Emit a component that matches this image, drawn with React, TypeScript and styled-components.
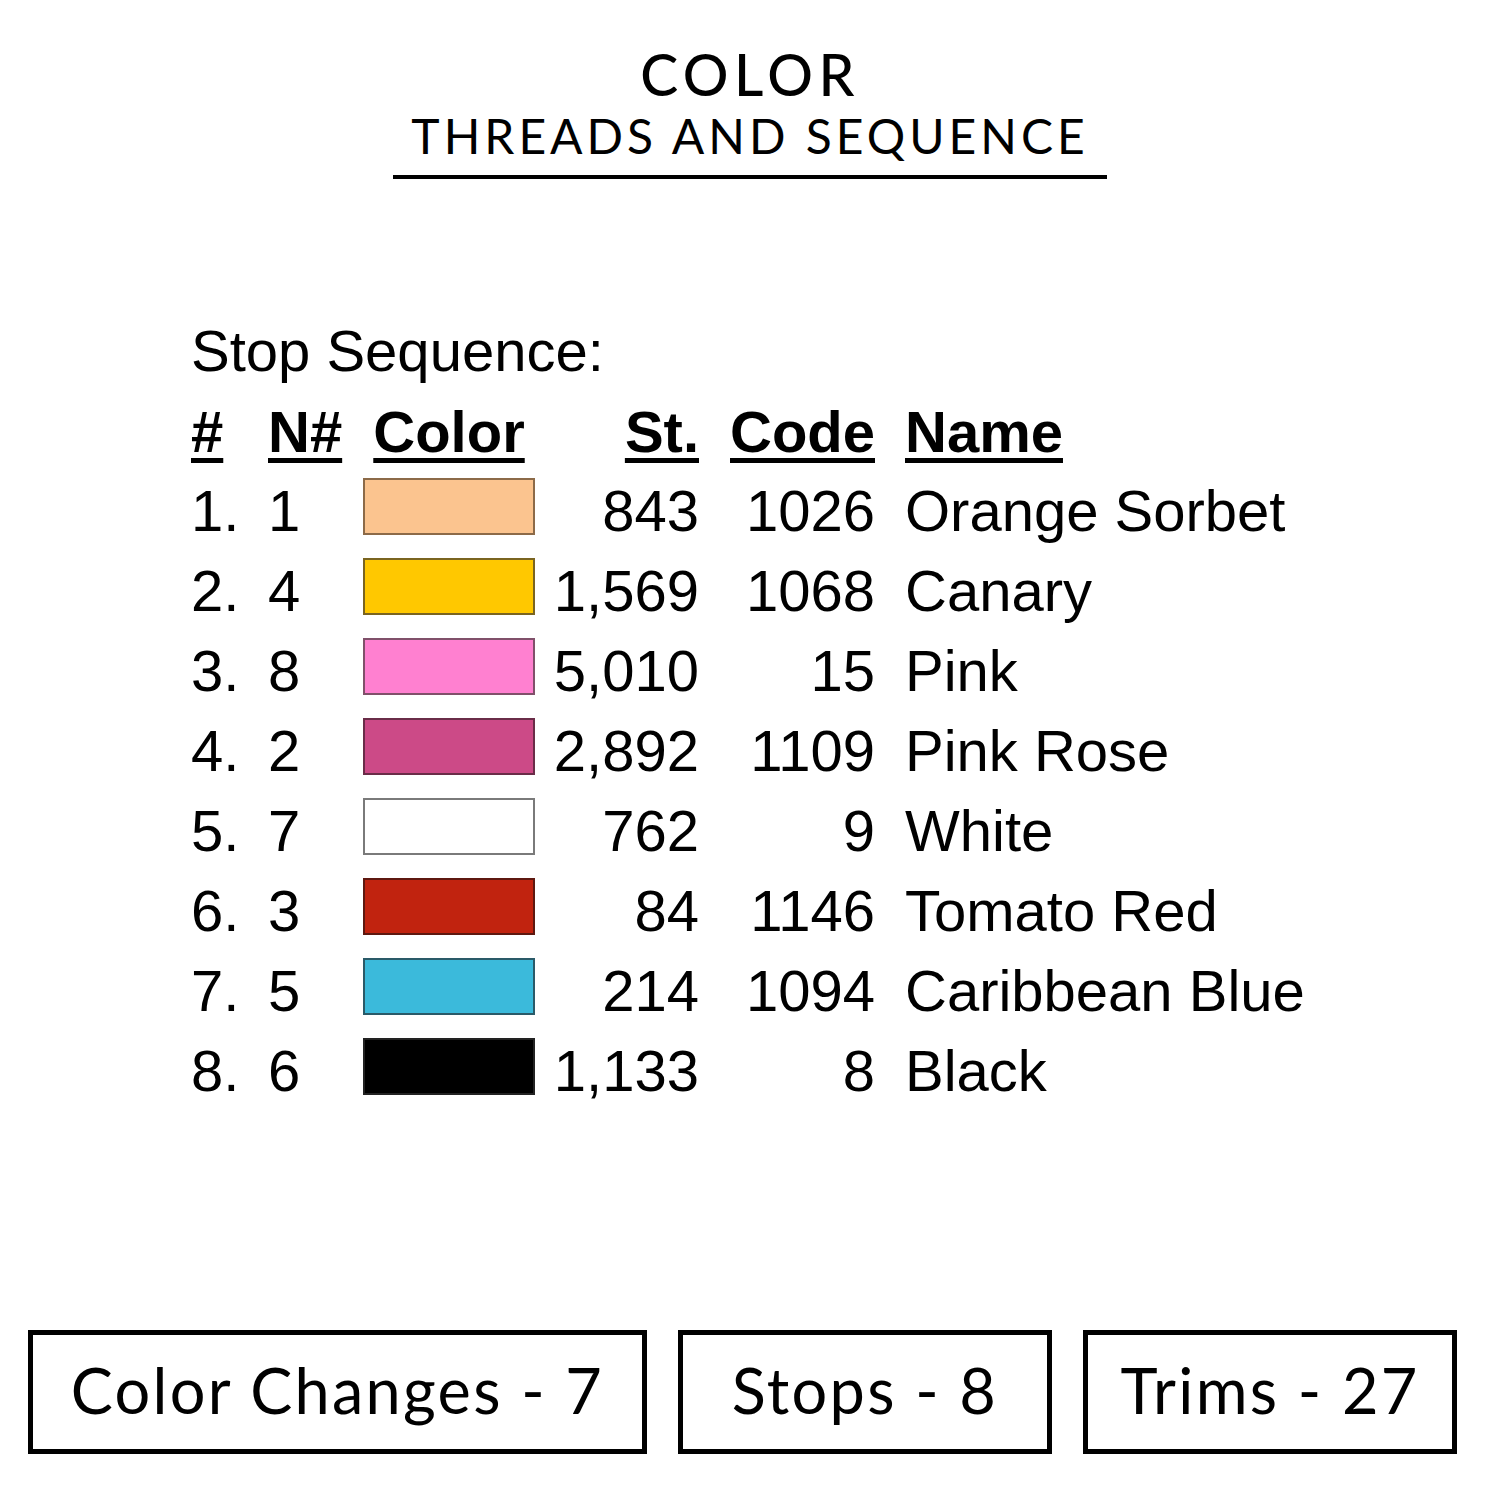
import React from 'react';
import styled, { createGlobalStyle } from 'styled-components';

const GlobalStyle = createGlobalStyle`
  html, body {
    margin: 0;
    padding: 0;
    background: #ffffff;
  }
`;

const Page = styled.div`
  width: 1500px;
  height: 1500px;
  background: #ffffff;
  display: flex;
  flex-direction: column;
  color: #000;
`;

const Header = styled.header`
  display: flex;
  flex-direction: column;
  align-items: center;
  padding-top: 44px;
`;

const Title = styled.h1`
  margin: 0;
  font-family: 'Lato', 'Open Sans', sans-serif;
  font-weight: 500;
  font-size: 57px;
  line-height: 60px;
  letter-spacing: 5.5px;
`;

const Subtitle = styled.h2`
  margin: 4px 0 0 0;
  padding: 0 18px 11px 18px;
  border-bottom: 4px solid #000;
  font-family: 'Lato', 'Open Sans', sans-serif;
  font-weight: 400;
  font-size: 48px;
  line-height: 56px;
  letter-spacing: 4px;
`;

const Sequence = styled.section`
  margin: 132px 0 0 191px;
  font-family: 'Liberation Sans', Arial, sans-serif;
  font-size: 58px;
`;

const Caption = styled.div`
  height: 80px;
  line-height: 80px;
`;

const Grid = styled.div`
  display: grid;
  grid-template-columns: 77px 95px 172px 164px 176px auto;
  grid-auto-rows: 80px;
  align-items: center;
`;

const HeadCell = styled.div<{ $align?: 'left' | 'center' | 'right'; $pad?: number }>`
  font-weight: bold;
  text-align: ${p => p.$align || 'left'};
  padding-left: ${p => p.$pad || 0}px;
  span {
    text-decoration: underline;
    text-decoration-thickness: 5px;
    text-underline-offset: 6px;
  }
`;

const Cell = styled.div<{ $align?: 'left' | 'right'; $pad?: number }>`
  text-align: ${p => p.$align || 'left'};
  padding-left: ${p => p.$pad || 0}px;
  white-space: nowrap;
  line-height: 1;
`;

const Swatch = styled.div<{ $color: string; $edge: string }>`
  height: 57px;
  margin-top: -9px;
  box-sizing: border-box;
  background: ${p => p.$color};
  border: 2px solid ${p => p.$edge};
`;

const Stats = styled.footer`
  margin-top: auto;
  margin-bottom: 46px;
  padding-left: 28px;
  display: flex;
  gap: 31px;
`;

const StatBox = styled.div<{ $width: number }>`
  width: ${p => p.$width}px;
  height: 124px;
  box-sizing: border-box;
  border: 5px solid #000;
  display: flex;
  align-items: center;
  justify-content: center;
  padding-bottom: 6px;
  font-family: 'Lato', 'Open Sans', sans-serif;
  font-size: 63px;
  letter-spacing: 2.3px;
`;

type Thread = {
  stop: number;
  needle: number;
  color: string;
  edge: string;
  stitches: string;
  code: string;
  name: string;
};

const threads: Thread[] = [
  { stop: 1, needle: 1, color: '#fbc48f', edge: '#8c6a48', stitches: '843', code: '1026', name: 'Orange Sorbet' },
  { stop: 2, needle: 4, color: '#ffc800', edge: '#7a6420', stitches: '1,569', code: '1068', name: 'Canary' },
  { stop: 3, needle: 8, color: '#ff80d0', edge: '#80506a', stitches: '5,010', code: '15', name: 'Pink' },
  { stop: 4, needle: 2, color: '#cc4a87', edge: '#6a2c48', stitches: '2,892', code: '1109', name: 'Pink Rose' },
  { stop: 5, needle: 7, color: '#ffffff', edge: '#7a7a7a', stitches: '762', code: '9', name: 'White' },
  { stop: 6, needle: 3, color: '#c1230f', edge: '#5e1810', stitches: '84', code: '1146', name: 'Tomato Red' },
  { stop: 7, needle: 5, color: '#3bbadb', edge: '#2a5a68', stitches: '214', code: '1094', name: 'Caribbean Blue' },
  { stop: 8, needle: 6, color: '#000000', edge: '#222222', stitches: '1,133', code: '8', name: 'Black' },
];

export default function App() {
  return (
    <Page>
      <GlobalStyle />
      <Header>
        <Title>COLOR</Title>
        <Subtitle>THREADS AND SEQUENCE</Subtitle>
      </Header>

      <Sequence>
        <Caption>Stop Sequence:</Caption>
        <Grid>
          <HeadCell><span>#</span></HeadCell>
          <HeadCell><span>N#</span></HeadCell>
          <HeadCell $align="center"><span>Color</span></HeadCell>
          <HeadCell $align="right"><span>St.</span></HeadCell>
          <HeadCell $align="right"><span>Code</span></HeadCell>
          <HeadCell $pad={30}><span>Name</span></HeadCell>
          {threads.map(t => (
            <React.Fragment key={t.stop}>
              <Cell>{t.stop}.</Cell>
              <Cell>{t.needle}</Cell>
              <Swatch $color={t.color} $edge={t.edge} />
              <Cell $align="right">{t.stitches}</Cell>
              <Cell $align="right">{t.code}</Cell>
              <Cell $pad={30}>{t.name}</Cell>
            </React.Fragment>
          ))}
        </Grid>
      </Sequence>

      <Stats>
        <StatBox $width={619}>Color Changes - 7</StatBox>
        <StatBox $width={374}>Stops - 8</StatBox>
        <StatBox $width={374}>Trims - 27</StatBox>
      </Stats>
    </Page>
  );
}
